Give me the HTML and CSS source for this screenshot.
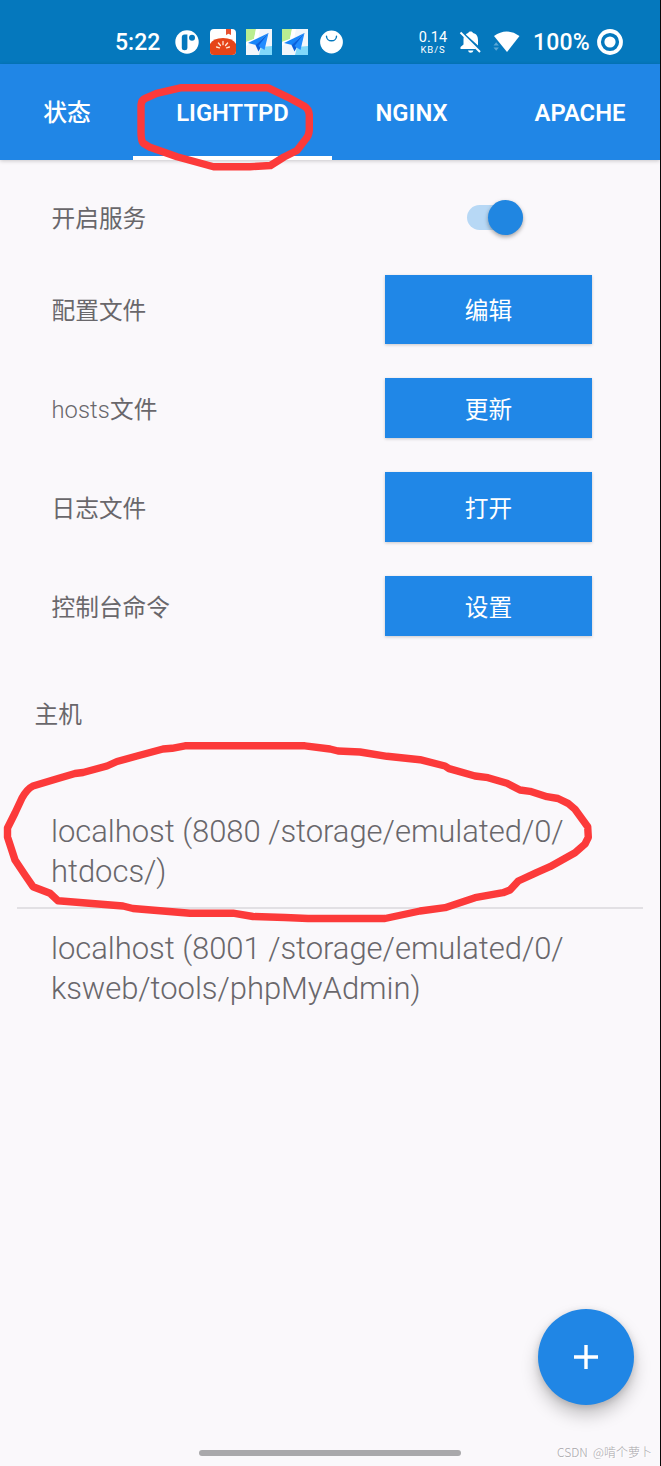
FILE: index.html
```html
<!DOCTYPE html>
<html lang="zh-CN">
<head>
<meta charset="utf-8">
<title>KSWEB</title>
<link rel="stylesheet" href="styles.css">
</head>
<body>
<div class="screen">
  <header class="status-bar">
    <span class="clock">5:22</span>
    <div class="notifications">
      <svg class="note-icon" width="26" height="26" viewBox="0 0 26 26"><circle cx="13" cy="13" r="11.7" fill="#fff"/><path d="M7.800 8q0-2.500 2.800-2.500h2.800v13.200q0 2.500-2.800 2.500t-2.800-2.500z" fill="#0578bd"/><circle cx="18" cy="8.8" r="3" fill="#0578bd"/></svg>
      <svg class="note-icon" width="26" height="26" viewBox="0 0 26 26"><clipPath id="app"><rect width="26" height="26" rx="4"/></clipPath><g clip-path="url(#app)"><path fill="#fff" d="M0 0h26v26H0z"/><path fill="#e7512f" d="M16 0h5v6l-2.500-1.200L16 6z"/><path fill="#e64418" d="M0 15Q3 9 13 9t13 6v11H0z"/><path d="M6.500 18l3 .8M8.400 14l2.100 2.500M13 12.500v3.200M17.600 14l-2.100 2.500M19.500 18l-3 .8" stroke="#ffe8d7" stroke-width="1.3" stroke-linecap="round"/></g></svg>
      <svg class="note-icon" width="26" height="26" viewBox="0 0 26 26"><path fill="#f2f6fb" d="M0 0h26v26H0z"/><path fill="#b9ee91" d="M0 0h10L8 10 0 13z"/><path fill="#80d8fa" d="M15 18l11-1v9H13z"/><path fill="#fff" d="M10 0h4l-2 10-12 7v-4l8-3z"/><path fill="#1685fa" d="M22.500 4L2 14l8 2z"/><path fill="#0860dc" d="M22.500 4L9.500 16l3 6.500z"/><path fill="#218cff" d="M22.500 4L12.500 17l6 4z"/></svg>
      <svg class="note-icon" width="26" height="26" viewBox="0 0 26 26"><path fill="#f2f6fb" d="M0 0h26v26H0z"/><path fill="#b9ee91" d="M0 0h10L8 10 0 13z"/><path fill="#80d8fa" d="M15 18l11-1v9H13z"/><path fill="#fff" d="M10 0h4l-2 10-12 7v-4l8-3z"/><path fill="#1685fa" d="M22.500 4L2 14l8 2z"/><path fill="#0860dc" d="M22.500 4L9.500 16l3 6.500z"/><path fill="#218cff" d="M22.500 4L12.500 17l6 4z"/></svg>
      <svg class="note-icon" width="26" height="26" viewBox="0 0 26 26"><circle cx="13.5" cy="13" r="11.4" fill="#fff"/><path d="M8.500 7.200a5 4.600 0 0 0 10 0" fill="none" stroke="#0578bd" stroke-width="1.4" stroke-linecap="round"/></svg>
    </div>
    <div class="speed"><span>0.14</span><small>KB/S</small></div>
    <svg class="bell" width="24" height="24" viewBox="0 0 24 24"><path fill="#fff" d="M6.800 4.500Q7.800 3.500 9.200 3.100C9.300.9 13.900.9 14 3.100c4 .9 5 4 5 7.200v5.200zM4.900 6.600L17 19H1.500v-2l3-2.500V10q0-1.900.4-3.400zM9 20.500h5.500q-.6 2.300-2.800 2.300T9 20.500z"/><path d="M1.500 2.500L21 22" stroke="#fff" stroke-width="2"/></svg>
    <svg class="wifi" width="28" height="24" viewBox="0 0 28 24"><path fill="#fff" d="M2 6Q14.500-3 27.500 6L15 22z"/><path fill="#5aa6d5" d="M1.500 15.500l2.700-3.300 2.700 3.300zM1.500 17.500l2.700 3.300 2.700-3.300z"/></svg>
    <span class="percent">100%</span>
    <svg class="battery" width="26" height="26" viewBox="0 0 26 26"><circle cx="13" cy="13" r="11" fill="none" stroke="#fff" stroke-width="3.8"/><circle cx="13" cy="13" r="5.6" fill="#fff"/></svg>
  </header>
  <nav class="tabs">
    <a class="tab tab-state">状态</a>
    <a class="tab tab-lighttpd active">LIGHTTPD</a>
    <a class="tab tab-nginx">NGINX</a>
    <a class="tab tab-apache">APACHE</a>
  </nav>
  <main>
    <section class="settings">
      <div class="setting"><span class="toggle-label">开启服务</span><div class="control"><span class="switch"><i class="knob"></i></span></div></div>
      <div class="setting"><span>配置文件</span><button class="tall">编辑</button></div>
      <div class="setting"><span><span class="latin">hosts</span>文件</span><button>更新</button></div>
      <div class="setting"><span>日志文件</span><button class="tall">打开</button></div>
      <div class="setting"><span>控制台命令</span><button>设置</button></div>
    </section>
    <h2>主机</h2>
    <section class="hosts">
      <p class="host first">localhost (8080 /storage/emulated/0/<br>htdocs/)</p>
      <p class="host">localhost (8001 /storage/emulated/0/<br>ksweb/tools/phpMyAdmin)</p>
    </section>
  </main>
  <button class="fab" aria-label="添加"><svg width="26" height="26" viewBox="0 0 26 26"><path d="M13 1v24M1 13h24" stroke="#fff" stroke-width="3.4"/></svg></button>
  <div class="home-bar"></div>
  <span class="credit"><span class="credit-site">CSDN</span>@啃个萝卜</span>
  <svg class="annotations" width="661" height="1466" viewBox="0 0 661 1466">
    <path d="M181.500 87.700H267.700L288 97.300 304 106Q309 109 309.300 115V130Q309 136 305 140L297 150.500 284 157 270.500 165.500 250 166.700H213.500L177 156.700 150 147.300 143 143Q141 140 141 132V105Q141.500 100 145 98.500L156.700 93.300Z"/>
    <path d="M33 786L58 778.500 75 773.500 83 772.500 107 766 117 761.500 137 756 163 749 172 748.300 185 745.800H305L330 749 338 751 360 752 387 756.300 420 759.700 445 766 449 768.600 475 776 488 777.700 507 783.300 520 790 530 791.300 547 796.700 558 798.500 568 803.300 575 809.300 587.700 826.700 588.300 837.300 585 844 575 852.700 550 866.700 537 872.300 518.300 881 510 890 503 892.700 475 897.700 445 907.700 420 911 385 918.500H308L285 917.500 253 916.500 233 913.200H190L133 908.500 123 906 58 900.800 50 893.300 33 886.700 25 875 15 860 7.500 837V828L15 813 22 798Q27 789 33 786Z"/>
  </svg>
</div>
</body>
</html>
```

FILE: styles.css
```css
* { box-sizing: border-box; }
body {
  margin: 0;
  font-family: Roboto, "Noto Sans CJK SC", sans-serif;
  color: #69676b;
  background: #faf8fb;
}
.screen {
  position: relative;
  width: 661px;
  height: 1466px;
  overflow: hidden;
  border-right: 1px solid #080808;
}
.status-bar {
  display: flex;
  align-items: center;
  height: 64px;
  padding: 20px 0 0 115px;
  color: #fff;
  background: #0578bd;
}
.clock, .percent { padding-top: 2px; font-size: 23px; font-weight: 500; line-height: 26px; }
.clock { width: 59px; }
.notifications { display: flex; gap: 10px; width: 245px; }
.note-icon { display: block; flex: none; }
.speed { display: flex; flex-direction: column; align-items: center; width: 28px; padding-top: 1px; font-size: 14.5px; line-height: 14px; }
.speed small { font-size: 9.5px; line-height: 9px; letter-spacing: .9px; }
.bell { margin-left: 12px; }
.wifi { margin-left: 9px; }
.percent { width: 64px; margin-left: 13px; letter-spacing: .2px; }
.tabs {
  display: flex;
  height: 96px;
  color: #fff;
  background: #2086e6;
  box-shadow: 0 1px 4px rgba(0,0,0,.2);
}
.tab {
  display: flex;
  align-items: center;
  justify-content: center;
  flex: none;
  height: 96px;
  padding-top: 2px;
  font-size: 23.8px;
  font-weight: 600;
  line-height: 30px;
}
.tab-state { width: 134px; margin-right: -1px; font-weight: 500; }
.tab-lighttpd { width: 199px; padding-top: 6px; }
.tab-nginx { width: 159px; }
.tab-apache { width: 178px; }
.active { border-bottom: 4px solid #fff; }
.settings { padding: 15px 68px 0 52px; font-size: 23.7px; }
.setting { display: flex; align-items: center; justify-content: space-between; height: 98.8px; }
.setting > span { margin-left: -.5px; }
.setting:first-child { height: 85px; }
.setting > .toggle-label { padding-bottom: 2px; }
.latin { font-weight: 300; letter-spacing: .1px; }
.control { display: flex; justify-content: flex-start; width: 125px; }
.switch { display: flex; align-items: center; justify-content: flex-end; width: 56px; height: 25px; background: #b7d8f5; border-radius: 13px; }
.knob { width: 35px; height: 35px; flex: none; background: #2086e1; border-radius: 50%; box-shadow: 0 2px 4px rgba(0,0,0,.35); }
.setting button {
  width: 207px;
  height: 60px;
  padding: 0;
  border: 0;
  color: #fff;
  background: #2087e7;
  font: inherit;
  box-shadow: 0 1px 3px rgba(0,0,0,.2);
}
.setting button.tall { height: 69.5px; }
h2 { margin: 43.800px 0 0 34.5px; font-size: 23.7px; line-height: 32px; font-weight: 400; }
.hosts { margin: 61px 17px 0; }
.host { height: 118px; margin: 0; padding: 20px 34px 0; font-size: 31px; font-weight: 300; line-height: 40px; letter-spacing: -.04px; white-space: nowrap; }
.first { height: 117px; border-bottom: 2px solid #e2e0e4; }
.fab {
  position: absolute;
  left: 538px;
  top: 1309px;
  display: grid;
  place-items: center;
  width: 96px;
  height: 96px;
  padding: 0;
  border: 0;
  border-radius: 50%;
  background: #2086e5;
  box-shadow: 0 10px 17px rgba(0,0,0,.22), 0 2px 7px rgba(0,0,0,.14);
}
.home-bar { position: absolute; left: 199px; top: 1450px; width: 262px; height: 6px; border-radius: 3px; background: #a9a8ab; }
.credit { position: absolute; left: 557px; top: 1443px; color: #a8a6aa; font-family: "Noto Sans CJK SC", sans-serif; font-size: 12px; font-weight: 300; line-height: 18px; white-space: nowrap; text-shadow: 1px 1px #fff; }
.credit-site { display: inline-block; width: 36px; }
.annotations { position: absolute; left: 0; top: 0; pointer-events: none; }
.annotations path { fill: none; stroke: #fc3a3a; stroke-width: 7.4; stroke-linejoin: round; }
```
